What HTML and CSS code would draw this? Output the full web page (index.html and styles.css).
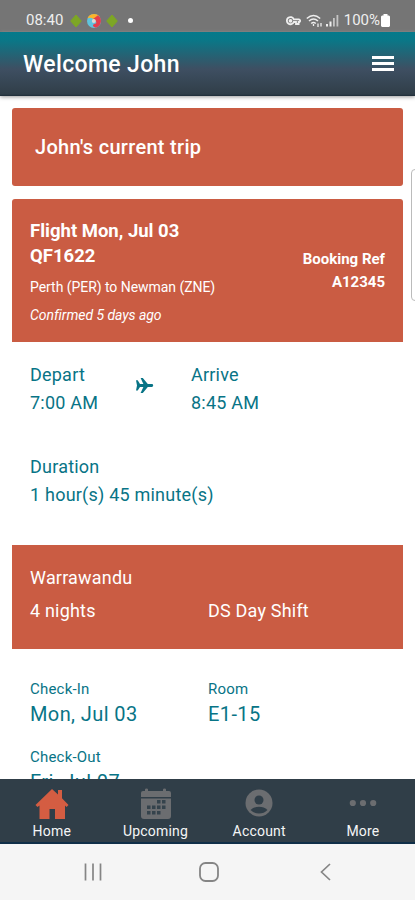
FILE: index.html
```html
<!DOCTYPE html>
<html lang="en">
<head>
<meta charset="utf-8">
<meta name="viewport" content="width=device-width, initial-scale=1">
<title>Welcome John</title>
<link rel="stylesheet" href="styles.css">
</head>
<body>
<div class="app">
  <div class="status">
    <div class="status-left">
      <span class="clock">08:40</span>
      <svg width="12" height="14" viewBox="0 0 12 14"><path d="M6 1L11.300 7 6 13 0.700 7z" fill="#7da625" stroke="#7da625" stroke-linejoin="round"/></svg>
      <svg class="swirl" width="14" height="14" viewBox="0 0 14 14"><circle cx="7" cy="7" r="7" fill="#5fc4de"/><path d="M0.5 4.5A7 7 0 0 1 13 3.5L8 7.5C7 4 3 3 0.5 4.500z" fill="#f9b32b"/><path d="M11 1.300A7 7 0 0 1 9 13.700C5 13 5 10 9 9.500 10 7 8 5 6 5z" fill="#e43e4c"/><circle cx="6.800" cy="7" r="2" fill="#ddd8d3"/></svg>
      <svg width="12" height="14" viewBox="0 0 12 14"><path d="M6 1L11.300 7 6 13 0.700 7z" fill="#7da625" stroke="#7da625" stroke-linejoin="round"/></svg>
      <i class="notice"></i>
    </div>
    <div class="status-right">
      <svg width="15" height="10" viewBox="0 0 15 10" fill="none" stroke="#eee" stroke-width="1.800"><path d="M7.800 3.300H12.800A1.500 1.500 0 0 1 13.500 6H12.600V8H10V6H7.800A3.600 3.600 0 1 1 7.800 3.300z"/><circle cx="4.500" cy="4.800" r="1" fill="#eee"/></svg>
      <svg class="wifi" width="17" height="14" viewBox="0 0 17 14" fill="none" stroke="#eee" stroke-width="1.500"><path d="M0.800 4.500Q7.500-1.500 14.200 4.500M3 7Q7.500 3 12 7M5.200 9.500Q7.500 7.500 9.800 9.500"/><path d="M7.500 12V10M12 9.500V13M15 9V12.500" stroke-width="1.300"/></svg>
      <svg class="signal" width="13" height="13" viewBox="0 0 13 13"><path d="M0 10h2v2.500H0zM3.500 7.500h2v5h-2z" fill="#eee"/><path d="M7 4h1.800v8.500H7zM10.500 1h1.800v11.500h-1.800z" fill="#c4c4c4"/></svg>
      <span class="percent">100%</span>
      <svg class="battery" width="9" height="13" viewBox="0 0 9 13"><path d="M2.500 0h4v1.500H8L9 2.500V12l-1 1H1l-1-1V2.500l1-1h1.500z" fill="#fff"/></svg>
    </div>
  </div>
  <header class="header">
    <h1>Welcome John</h1>
    <div class="burger"><i></i><i></i><i></i></div>
  </header>
  <main class="content">
    <div class="card title-card"><span>John's current trip</span></div>
    <section class="card flight">
      <div class="flight-info">
        <div class="flight-name">Flight Mon, Jul 03</div>
        <div class="flight-name">QF1622</div>
        <div class="route">Perth (PER) to Newman (ZNE)</div>
        <div class="confirmed">Confirmed 5 days ago</div>
      </div>
      <div class="booking"><div>Booking Ref</div><div>A12345</div></div>
    </section>
    <section class="times">
      <div class="depart"><div>Depart</div><div>7:00 AM</div></div>
      <svg class="plane" width="19" height="17" viewBox="0 0 19 17"><path d="M1 3.200H2.700L5 7.100H8.400L5.600 1H7.800L12.800 7.100H16.800A1.400 1.400 0 0 1 16.800 9.900H12.800L7.800 16H5.600L8.400 9.900H5L2.700 13.500H1L2 8.500z" fill="#087486"/></svg>
      <div class="arrive"><div>Arrive</div><div>8:45 AM</div></div>
    </section>
    <section class="duration"><div>Duration</div><div>1 hour(s) 45 minute(s)</div></section>
    <section class="lodging">
      <div class="wide">Warrawandu</div>
      <div>4 nights</div><div>DS Day Shift</div>
    </section>
    <section class="stay">
      <div><div class="label">Check-In</div><div class="value">Mon, Jul 03</div></div>
      <div><div class="label">Room</div><div class="value">E1-15</div></div>
      <div><div class="label">Check-Out</div><div class="value">Fri, Jul 07</div></div>
    </section>
    <div class="edge-handle"></div>
  </main>
  <nav class="tabs">
    <div class="tab"><svg width="34" height="32" viewBox="0 0 34 32"><path d="M17 1L23 6.500V2H27V10.300L33.500 17 31.500 19 30 17.600V31H20V21H14.500V31H4.500V17.600L2.500 19 0.500 17z" fill="#d45d42"/></svg><span>Home</span></div>
    <div class="tab"><svg width="32" height="32" viewBox="0 0 32 32"><path d="M1 9V5Q1 3 3 3H5V1.500Q5 0.500 6.500 0.500T8 1.500V3H23V1.500Q23 0.500 24.500 0.500T26 1.500V3H29Q31 3 31 5V9z" fill="#6b6d70"/><path d="M1 10.500H31V28Q31 31 28 31H4Q1 31 1 28z" fill="#6b6d70"/><path d="M17 12h3.500v3.500H17zM22 12h3.500v3.500H22zM7 17.500h3.500V21H7zM12 17.500h3.500V21H12zM17 17.500h3.500V21H17zM22 17.500h3.500V21H22zM7 23h3.500v3.500H7zM12 23h3.500v3.500H12zM17 23h3.500v3.500H17z" fill="#35434c"/></svg><span>Upcoming</span></div>
    <div class="tab"><svg width="28" height="30" viewBox="0 0 28 30"><circle cx="14" cy="15" r="13.500" fill="#6b6d70"/><circle cx="14" cy="12" r="4.500" fill="#303e48"/><path d="M5.500 22Q9 18.800 14 18.800T22.500 22Q19 25.500 14 25.500T5.500 22z" fill="#303e48"/></svg><span>Account</span></div>
    <div class="tab"><svg width="28" height="30" viewBox="0 0 28 30" fill="#6b6d70"><circle cx="3.800" cy="15" r="3.100"/><circle cx="14" cy="15" r="3.100"/><circle cx="24.200" cy="15" r="3.100"/></svg><span>More</span></div>
  </nav>
  <div class="system">
    <svg width="18" height="18" viewBox="0 0 18 18" stroke="#858585" stroke-width="1.700"><path d="M1.500 0.500v17M9 0.500v17M16.500 0.500v17"/></svg>
    <svg class="home-key" width="20" height="20" viewBox="0 0 20 20" fill="none" stroke="#858585" stroke-width="1.800"><rect x="1" y="1" width="18" height="18" rx="5.500"/></svg>
    <svg width="11" height="18" viewBox="0 0 11 18" fill="none" stroke="#858585" stroke-width="1.700"><path d="M10 1L1.500 9 10 17"/></svg>
  </div>
</div>
</body>
</html>
```
FILE: styles.css
```css
* { box-sizing: border-box; }
body { margin: 0; background: #fff; font-family: Roboto, "Liberation Sans", sans-serif; }
svg { display: block; flex: none; }
.app { display: flex; flex-direction: column; width: 415px; height: 900px; overflow: hidden; }

.status { height: 32px; flex: none; background: #757575; color: #eee; display: flex; justify-content: space-between; padding: 9px 25px 0 26px; font-size: 15px; line-height: 23px; }
.status-left, .status-right { display: flex; align-items: center; height: 23px; }
.clock { width: 38px; margin-right: 6px; }
.swirl { margin: 0 5px; }
.notice { width: 5px; height: 5px; border-radius: 50%; background: #fff; margin-left: 10px; }
.wifi { margin-left: 5px; }
.signal { margin-left: 3px; }
.percent { margin-left: 5px; }
.battery { margin-left: 1px; }

.header { height: 64px; flex: none; display: flex; align-items: center; justify-content: space-between; padding: 0 21px 0 23px; background: linear-gradient(#057a8b 0, #097888 12%, #3e4f62 58%, #303e48 97%, #1e2c38 100%); box-shadow: 0 1px 4px #999; z-index: 1; }
.header h1 { margin: 2px 0 0; font-size: 23px; line-height: 30px; font-weight: 500; color: #fff; letter-spacing: 0.35px; }
.burger { width: 22px; display: grid; gap: 3px; margin-bottom: 1px; }
.burger i { height: 3px; background: #fff; }

.content { position: relative; flex: 1; min-height: 0; overflow: hidden; padding: 12px 12px 0; color: #087486; font-size: 18px; line-height: 28px; letter-spacing: 0.22px; white-space: nowrap; }
.card { background: #ca5c43; color: #fff; border-radius: 3px; }
.title-card { height: 78px; display: flex; align-items: center; padding: 0 23px; font-size: 20px; font-weight: 500; letter-spacing: 0.3px; }
.flight { height: 143px; margin-top: 13px; padding: 20px 18px 0; display: flex; justify-content: space-between; border-radius: 3px 3px 0 0; letter-spacing: 0; }
.flight-name { font-size: 18.500px; line-height: 25px; font-weight: 700; }
.route { font-size: 14px; line-height: 28px; margin-top: 4px; letter-spacing: -0.05px; }
.confirmed { font-size: 14px; line-height: 28px; font-style: italic; letter-spacing: -0.05px; }
.booking { padding-top: 29px; text-align: right; font-size: 15px; line-height: 22.500px; font-weight: 700; }
.times { display: flex; padding: 19px 18px 0; height: 92px; }
.depart { width: 105px; }
.plane { margin-top: 16px; }
.arrive { margin-left: 37px; }
.duration { padding: 19px 18px 0; height: 111px; }
.lodging { height: 104px; background: #ca5c43; color: #fff; padding: 16px 18px; display: grid; grid-template-columns: 178px 1fr; grid-auto-rows: 33px; line-height: 33px; font-size: 18px; letter-spacing: 0.2px; }
.wide { grid-column: 1 / -1; }
.stay { display: grid; grid-template-columns: 178px 1fr; padding: 27px 18px 0; row-gap: 17px; }
.label { font-size: 15px; line-height: 26px; letter-spacing: 0.2px; }
.value { font-size: 20px; line-height: 25px; letter-spacing: 0.4px; }
.edge-handle { position: absolute; top: 73px; right: -4px; width: 8px; height: 132px; border: 1px solid #bbb; border-radius: 5px; background: #fff; }

.tabs { height: 65px; flex: none; display: grid; grid-template-columns: repeat(4, 103.700px); background: #303e48; border-bottom: 2px solid #102f48; }
.tab { display: flex; flex-direction: column; align-items: center; justify-content: space-between; padding: 9px 0 1px; color: #f4f5f6; font-size: 14px; line-height: 20px; letter-spacing: 0.2px; }
.system { height: 56px; flex: none; background: #f5f5f5; display: flex; align-items: center; justify-content: space-between; padding: 0 84px; }
.home-key { margin-right: 4px; }
```
